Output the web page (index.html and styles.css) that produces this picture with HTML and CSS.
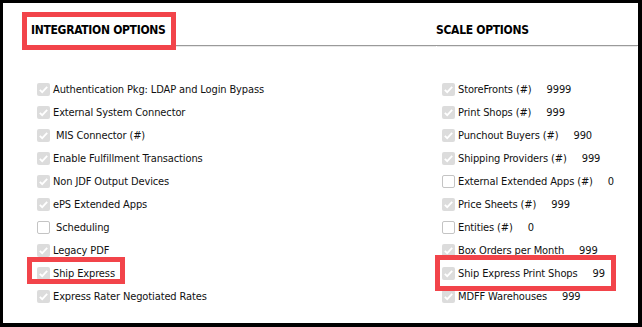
FILE: index.html
```html
<!DOCTYPE html>
<html>
<head>
<meta charset="utf-8">
<link rel="stylesheet" href="styles.css">
</head>
<body>
<div class="frame">
  <div class="grid">
    <div class="col">
      <div class="head"><span class="title hl hl-title">INTEGRATION OPTIONS</span></div>
      <ul class="list">
        <li class="row"><span class="cb on"></span>Authentication Pkg: LDAP and Login Bypass</li>
        <li class="row"><span class="cb on"></span>External System Connector</li>
        <li class="row"><span class="cb on"></span>&nbsp;MIS Connector (#)</li>
        <li class="row"><span class="cb on"></span>Enable Fulfillment Transactions</li>
        <li class="row"><span class="cb on"></span>Non JDF Output Devices</li>
        <li class="row"><span class="cb on"></span>ePS Extended Apps</li>
        <li class="row"><span class="cb"></span>&nbsp;Scheduling</li>
        <li class="row"><span class="cb on"></span>Legacy PDF</li>
        <li class="row"><span class="hl hl-ship"><span class="cb on"></span>Ship Express</span></li>
        <li class="row"><span class="cb on"></span>Express Rater Negotiated Rates</li>
      </ul>
    </div>
    <div class="col col-right">
      <div class="head"><span class="title">SCALE OPTIONS</span></div>
      <ul class="list">
        <li class="row"><span class="cb on"></span>StoreFronts (#)<span class="val">9999</span></li>
        <li class="row"><span class="cb on"></span>Print Shops (#)<span class="val">999</span></li>
        <li class="row"><span class="cb on"></span>Punchout Buyers (#)<span class="val">990</span></li>
        <li class="row"><span class="cb on"></span>Shipping Providers (#)<span class="val">999</span></li>
        <li class="row"><span class="cb"></span>External Extended Apps (#)<span class="val">0</span></li>
        <li class="row"><span class="cb on"></span>Price Sheets (#)<span class="val">999</span></li>
        <li class="row"><span class="cb"></span>Entities (#)<span class="val">0</span></li>
        <li class="row"><span class="cb on"></span>Box Orders per Month<span class="val">999</span></li>
        <li class="row"><span class="hl hl-ship2"><span class="cb on"></span>Ship Express Print Shops<span class="val">99</span></span></li>
        <li class="row"><span class="cb on"></span>MDFF Warehouses<span class="val">999</span></li>
      </ul>
    </div>
  </div>
</div>
</body>
</html>
```
FILE: styles.css
```css
html, body {
  margin: 0;
  padding: 0;
  background: #000;
}
.frame {
  width: 635px;
  height: 320px;
  margin: 3px 4px 4px 3px;
  background: #fff;
  overflow: hidden;
  font-family: "DejaVu Sans Condensed", "DejaVu Sans", sans-serif;
  font-size: 11px;
  letter-spacing: -0.12px;
  color: #111;
}
.grid {
  display: grid;
  grid-template-columns: 406px 1fr;
  padding-left: 28px;
}
.head {
  height: 43px;
  display: flex;
  align-items: flex-start;
  border-bottom: 1px solid #9a9a9a;
  box-shadow: 0 2px 0 -1px #e8e8e8;
  padding-top: 20px;
  box-sizing: border-box;
}
.col-right .head {
  margin-left: -1px;
}
.title {
  display: block;
  height: 14px;
  line-height: 14px;
  font-weight: bold;
  font-size: 12px;
  letter-spacing: -0.3px;
  color: #000;
}
.list {
  list-style: none;
  margin: 0;
  padding: 32px 0 0 6px;
}
.col-right .list {
  padding-left: 5px;
}
.row {
  height: 23px;
  display: flex;
  align-items: center;
  white-space: nowrap;
}
.row > .hl {
  display: flex;
  align-items: center;
  height: 14px;
}
.cb {
  width: 13px;
  height: 13px;
  box-sizing: border-box;
  border-radius: 2px;
  margin-right: 3px;
  flex: none;
  border: 1px solid #c4c4c4;
  background: #fff;
}
.cb.on {
  border: none;
  background: #dcdcdc url("data:image/svg+xml;utf8,<svg xmlns='http://www.w3.org/2000/svg' width='13' height='13' viewBox='0 0 13 13'><path d='M2.8 6.8 L5.2 9.2 L10.2 3.8' fill='none' stroke='white' stroke-width='1.8'/></svg>") no-repeat center;
}
.val {
  margin-left: 15px;
}
.hl {
  position: relative;
}
.hl::after {
  content: "";
  position: absolute;
  border: 5px solid #f2444a;
  pointer-events: none;
}
.hl-title::after {
  left: -9px;
  right: -10px;
  top: -11px;
  bottom: -13px;
}
.hl-ship::after {
  left: -10px;
  right: -10px;
  top: -10px;
  bottom: -3px;
}
.hl-ship2::after {
  left: -7px;
  right: -11px;
  top: -12px;
  bottom: -10px;
}
```
